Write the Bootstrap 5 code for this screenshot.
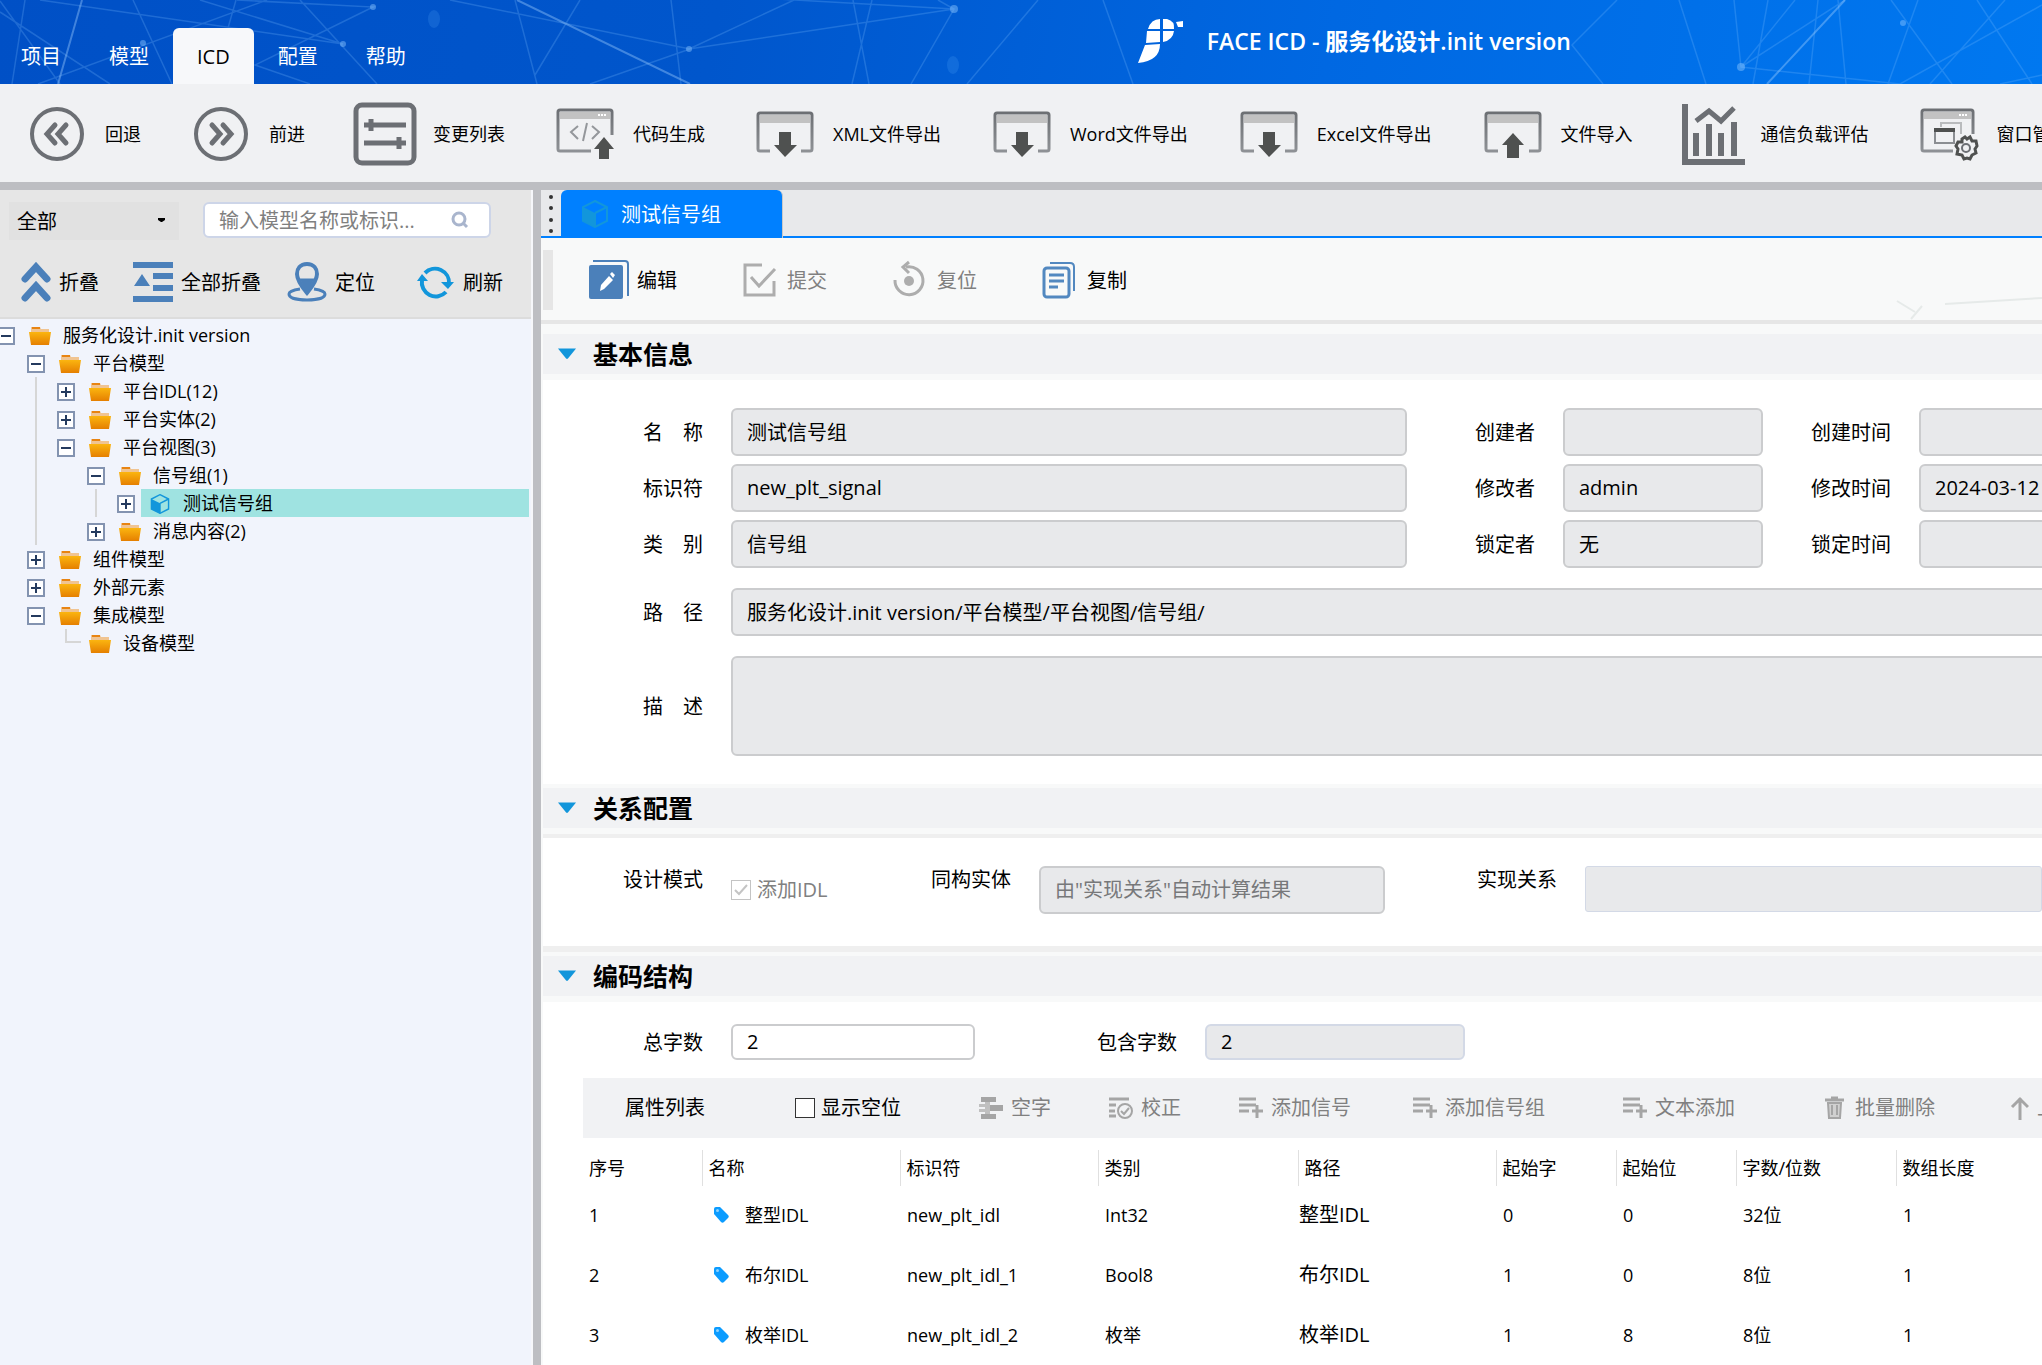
<!DOCTYPE html>
<html lang="zh-CN">
<head>
<meta charset="utf-8">
<meta name="viewport" content="width=device-width, initial-scale=1">
<title>FACE ICD - 服务化设计.init version</title>
<link href="https://cdn.jsdelivr.net/npm/bootstrap@5.3.0/dist/css/bootstrap.min.css" rel="stylesheet">
<style>
  body { font-family: "Open Sans", "Noto Sans CJK SC", sans-serif; font-size: 20px; line-height: 28px; color: #000; background: #fff; }
  button, input, select, textarea { font-family: inherit; font-size: inherit; line-height: inherit; color: inherit; }
  button { background: none; border: 0; padding: 0; white-space: nowrap; }
  svg { flex: none; display: block; }

  /* header */
  .app-header { height: 84px; background: linear-gradient(100deg, #0050c6 0%, #0056cc 35%, #0068e2 65%, #0078f0 100%); }
  .header-mesh { position: absolute; inset: 0; width: 100%; height: 100%; }
  .main-menu { padding: 28px 0 0 0; }
  .main-menu a { display: block; height: 56px; line-height: 58px; padding: 0 24px; color: #fff; text-decoration: none; border-radius: 6px 6px 0 0; }
  .main-menu li:first-child a { padding-left: 21px; }
  .main-menu a.active { background: #f7f8fa; color: #000; }
  .app-brand { margin-left: 708px; height: 82px; gap: 24px; color: #fff; }
  .app-brand h1 { font-size: 23px; font-weight: 600; line-height: 28px; }

  /* main tool bar */
  .tool-strip { height: 106px; background: #f0f1f3; border-bottom: 8px solid #bdbec2; gap: 48px; padding: 2px 0 0 25px; font-size: 18px; }
  .tool-strip button { gap: 16px; }
  .tool-strip .export { margin-right: 1px; }

  /* side panel */
  .main-split { min-height: 0; }
  .side-pane { flex: 0 0 533px; background: #f1f4fc; border-right: 2px solid #f6f7fa; }
  .side-top { background: #e6e6e6; height: 129px; border-bottom: 2px solid #dcdcdc; }
  .side-filter { padding: 12px 0 0 9px; gap: 24px; }
  .type-pick { position: relative; width: 170px; }
  .type-pick select { appearance: none; width: 100%; height: 38px; padding: 2px 8px 0; background: #e1e1e1; border: 0; border-radius: 0; }
  .type-pick svg { position: absolute; right: 13px; top: 15px; pointer-events: none; }
  .search-box { width: 288px; height: 36px; background: #fff; border: 2px solid #cdd5e8; border-radius: 6px; padding: 0 20px 0 14px; }
  .search-box input { flex: 1; min-width: 0; border: 0; outline: 0; padding: 2px 0 0; background: none; }
  .search-box input::placeholder { color: #808080; opacity: 1; }
  .side-tools { display: grid; grid-template-columns: 112px 154px 130px auto; padding: 22px 0 0 21px; }
  .side-tools button { gap: 8px; height: 40px; }
  .txt { padding-top: 2px; }
  .pane-split { flex: 0 0 8px; background: #bdbec2; }

  /* tree */
  .tree, .tree ul { list-style: none; margin: 0; padding: 0; font-size: 18px; }
  .tree { padding: 2px 2px 0 0; margin-left: -3px; }
  .tree ul { padding-left: 30px; }
  .tree ul.guide { background: linear-gradient(#d6d6d6, #d6d6d6) 8px 0 / 2px 100% no-repeat; }
  .tree-row { display: flex; align-items: center; height: 28px; }
  .tree-label { flex: 1; display: flex; align-items: center; gap: 12px; height: 28px; margin-left: 6px; padding-left: 8px; white-space: nowrap; }
  .tree-label.picked { background: #9fe3e1; }
  .fold { position: relative; top: 1px; width: 18px; height: 18px; border: 2px solid #8393b0; background: linear-gradient(#243a5e, #243a5e) center / 10px 2px no-repeat #fff; }
  .fold.plus { background: linear-gradient(#243a5e, #243a5e) center / 10px 2px no-repeat, linear-gradient(#243a5e, #243a5e) center / 2px 10px no-repeat #fff; }
  .tree-label svg { margin-top: 2px; }
  .leaf-elbow { width: 18px; height: 14px; margin-bottom: 14px; }
  .leaf-elbow::before { content: ""; display: block; width: 16px; height: 14px; margin-left: 8px; border-left: 2px solid #d6d6d6; border-bottom: 2px solid #d6d6d6; }

  /* work area */
  .work-pane { flex: 1; min-width: 0; overflow: hidden; background: #f8f9f9; }
  .doc-tabs { height: 48px; background: #e8e9eb; border-bottom: 2px solid #0080ff; }
  .doc-grip { width: 20px; }
  .doc-tab { height: 48px; width: 222px; gap: 12px; padding-left: 20px; background: #0080ff; color: #fff; border-radius: 6px 6px 0 0; border-right: 1px solid #c8c8c8; }
  .doc-actions { position: relative; height: 86px; border-bottom: 4px solid #e6e6e6; padding: 12px 0 0 2px; }
  .bar-grip { width: 10px; height: 60px; background: #e6e6e6; margin-right: 36px; }
  .doc-actions button { width: 150px; height: 60px; gap: 8px; }
  .doc-actions button:disabled, .list-tools button:disabled { color: #808080; }
  .corner-mesh { position: absolute; right: 0; top: 0; }
  .sect { margin-left: 2px; padding-top: 4px; }
  .sect.first { padding-top: 10px; }
  .sect-head { height: 40px; background: #f1f2f4; padding-left: 15px; gap: 17px; }
  .sect-head h2 { font-size: 25px; font-weight: 700; line-height: 40px; }
  .sect-body { background: #fff; margin-top: 6px; }
  .sect-body.fill { min-height: 400px; }
  .rule-above { border-top: 4px solid #efefef; }
  .rule-below { border-bottom: 6px solid #efefef; }
  .form-grid { display: grid; }
  .form-grid > label { text-align: right; padding: 2px 28px 0 0; white-space: pre; }
  .fld { width: 100%; height: 48px; border: 2px solid #cbccce; border-radius: 6px; background: #e8e9eb; padding: 0 14px 2px; outline: 0; display: block; resize: none; }
  .fld::placeholder { color: #77787a; opacity: 1; }
  .fld.short { height: 36px; }
  .fld.editable { background: #fff; }
  .fld.soft { border-color: #d3d9e6; }
  .fld.thin { height: 46px; border-width: 1px; border-radius: 3px; }
  .fld.tall { height: 100px; }
  .fld.spaced { margin: 12px 0; }
  .basic-grid { grid-template-columns: 188px 676px 156px 200px 156px 200px; row-gap: 8px; align-items: center; padding: 28px 0; }
  .wide { grid-column: 2 / -1; }
  .relation-grid { grid-template-columns: 188px 120px 188px 346px 200px 1fr; align-items: start; padding: 28px 0 32px; }
  .relation-grid > label { padding-top: 0; }
  .code-grid { grid-template-columns: 188px 244px 230px 260px; align-items: center; padding: 22px 0 18px; }
  .tick { appearance: none; width: 20px; height: 20px; margin: 0 6px 0 0; border: 1px solid #333; background: #fff; flex: none; border-radius: 0; }
  .tick-wrap { height: 48px; }
  .tick-wrap svg { position: absolute; left: 3px; top: 4px; }
  .tick-wrap .cap { color: #808080; }
  .tick:disabled { border-color: #c4c4c4; }

  .attr-list { margin-left: 40px; }
  .list-bar { height: 60px; background: #f1f2f4; padding-left: 42px; }
  .list-bar h3 { font-size: 20px; font-weight: 400; line-height: 28px; width: 170px; }
  .list-bar .show-empty { width: 184px; }
  .list-tools { display: grid; grid-template-columns: 130px 130px 174px 210px 200px 182px 100px; }
  .list-tools button { gap: 8px; }
  .attr-table { table-layout: fixed; width: 100%; margin-top: 12px; font-size: 18px; line-height: 26px; border-collapse: collapse; white-space: nowrap; }
  .attr-table th { height: 36px; padding: 0 6px; font-weight: 400; border-left: 1px solid #e0e0e0; }
  .attr-table th:first-child { border-left: 0; }
  .attr-table td { height: 60px; padding: 0 7px 2px; }
  .attr-table td:first-child { padding-left: 6px; }
  .attr-table td.path { padding-left: 1px; font-size: 20px; }
  .attr-table .name-cell { gap: 16px; padding-left: 4px; }
</style>
</head>
<body class="d-flex flex-column vh-100 overflow-hidden">

<svg width="0" height="0" class="position-absolute" aria-hidden="true">
  <defs>
    <linearGradient id="gFold" x1="0" y1="0" x2="0" y2="1"><stop offset="0" stop-color="#fbb510"/><stop offset="1" stop-color="#e57f00"/></linearGradient>
    <linearGradient id="gWin" x1="0" y1="0" x2="0" y2="1"><stop offset="0" stop-color="#6d7074"/><stop offset="1" stop-color="#8e9195"/></linearGradient>
    <symbol id="folder" viewBox="0 0 22 18"><path d="M2 0h9l1 2h8v4H2z" fill="#f0c492"/><path d="M3 0h8v2H3z" fill="#e88412"/><path d="M0 5h22l-2 13H2z" fill="url(#gFold)"/></symbol>
    <symbol id="cube" viewBox="0 0 28 28"><path d="M14 1 26 7v14l-12 6L2 21V7z" fill="none" stroke="#1296db" stroke-width="2"/><path d="M2 7l12 6v14L2 21z" fill="#1296db"/><path d="M14 13l12-6M14 13v14" stroke="#1296db" stroke-width="2"/></symbol>
    <symbol id="winbox" viewBox="0 0 64 64"><path d="M17 49H7a2 2 0 0 1-2-2V13a2 2 0 0 1 2-2h50a2 2 0 0 1 2 2v34a2 2 0 0 1-2 2H48" fill="none" stroke="url(#gWin)" stroke-width="3"/><path d="M7 13h50v8H7z" fill="#c2c2c2"/></symbol>
    <symbol id="addrow" viewBox="0 0 24 24"><path d="M0 3h17M0 9h17M0 15h10M13 15h11M18 9v13" fill="none" stroke="#a5a5a5" stroke-width="3"/></symbol>
    <symbol id="tag" viewBox="0 0 16 16"><path d="M1 2a2 2 0 0 1 2-2h4l8 8c1 1 1 2 0 3l-4 4c-1 1-2 1-3 0L1 7z" fill="#0b9cff"/><circle cx="4.500" cy="3.500" r="1.500" fill="#8fd2ff"/></symbol>
    <symbol id="caret" viewBox="0 0 20 12"><path d="M0 0h20l-9 11q-1 1-2 0z" fill="#1296db"/></symbol>
  </defs>
</svg>

<header class="app-header position-relative d-flex flex-shrink-0 overflow-hidden">
  <svg class="header-mesh" viewBox="0 0 2042 84" preserveAspectRatio="xMinYMin slice" aria-hidden="true">
    <g fill="none" stroke="#7fc0ff" stroke-opacity=".24" stroke-width="1.500">
      <path d="M25 0 12 84M0 12 110 84M0 1 60 84M40 0 343 44M133 0l39 84M200 0 343 44M237 0l136 7L255 65l55 19M300 0l77 84M236 0l-8 28M267 0 38 84M450 0l240 49M515 0l22 84M580 0l-45 75M671 0l10 84M590 84l100-35M794 0 689 49 954 9 760-2M853 0l16 84M872 0l-20 84M938 0l16 9-43 75M1038 0l-71 84M1103 0l30 84"/>
      <path d="M1617 0l-45 45 31 39M1679 0l27 84M1734 0l7 67L1900 84M1768 0l-15 84M1741 67 1795 0M1741 67 1845 0M1818 0l-9 84M1838 0l8 84M1891 0l61 84M1918 0l-30 84M2042 5 1900 84M2005 0l-75 84M1977 0l55 84M2042 75l-42 9"/>
    </g>
    <g fill="none" stroke="#9fd0ff" stroke-opacity=".4" stroke-width="2"><path d="M82 0 58 84M517 0l173 84M1845 0l-78 84"/></g>
    <g fill="#8fc8ff" fill-opacity=".45"><circle cx="143" cy="43" r="3"/><circle cx="373" cy="7" r="3"/><circle cx="343" cy="44" r="3"/><circle cx="689" cy="49" r="3"/><circle cx="954" cy="9" r="4"/><circle cx="1741" cy="67" r="4"/><circle cx="1903" cy="23" r="3"/></g>
    <g fill="#5fb0ff" fill-opacity=".18"><ellipse cx="434" cy="19" rx="6" ry="9"/><ellipse cx="953" cy="65" rx="6" ry="9"/></g>
  </svg>
  <nav class="position-relative" aria-label="主菜单">
    <ul class="main-menu list-unstyled d-flex mb-0">
      <li><a href="#">项目</a></li><li><a href="#">模型</a></li><li><a href="#" class="active" aria-current="page">ICD</a></li><li><a href="#">配置</a></li><li><a href="#">帮助</a></li>
    </ul>
  </nav>
  <div class="app-brand position-relative d-flex align-items-center text-nowrap">
    <svg width="45" height="44" viewBox="0 0 45 44" fill="#fff"><path d="M10 10Q13 0 22 0v10H10zM25 0h4q8 2 7 10H25zM9 12h13v11l-14 1zM25 12h11q-1 9-11 11zM7 26l15-1q0 17-22 19zM38 3l7-1v6h-5z"/></svg>
    <h1 class="mb-0">FACE ICD - 服务化设计.init version</h1>
  </div>
</header>

<div class="tool-strip d-flex flex-shrink-0 overflow-hidden" role="toolbar" aria-label="工具栏">
  <button type="button" class="d-flex align-items-center"><svg width="64" height="64" viewBox="0 0 64 64" fill="none" stroke="#6c6f74"><circle cx="32" cy="32" r="25" stroke-width="4"/><path d="M30 23 22 32l8 9M41 23l-8 9 8 9" stroke-width="5" stroke-linecap="round"/></svg>回退</button>
  <button type="button" class="d-flex align-items-center"><svg width="64" height="64" viewBox="0 0 64 64" fill="none" stroke="#6c6f74"><circle cx="32" cy="32" r="25" stroke-width="4"/><path d="M23 23l8 9-8 9M34 23l8 9-8 9" stroke-width="5" stroke-linecap="round"/></svg>前进</button>
  <button type="button" class="d-flex align-items-center"><svg width="64" height="64" viewBox="0 0 64 64" fill="none" stroke="#6c6f74"><rect x="3" y="3" width="58" height="58" rx="6" stroke-width="5"/><path d="M11 23h42M11 41h42M18 17v12M46 35v12" stroke-width="5"/></svg>变更列表</button>
  <button type="button" class="d-flex align-items-center"><svg width="64" height="64" viewBox="0 0 64 64" fill="none"><path d="M38 49H7a2 2 0 0 1-2-2V10a2 2 0 0 1 2-2h50a2 2 0 0 1 2 2v23" stroke="url(#gWin)" stroke-width="3"/><path d="M7 10h50v7H7z" fill="#c2c2c2"/><path d="M45 13h9" stroke="#fff" stroke-width="2" stroke-dasharray="2 1"/><path d="M25 24l-7 6 7 7M39 24l7 6-7 7M34 21l-4 18" stroke="#94979b" stroke-width="2"/><path d="M51 35l10 12h-5v10H46V47h-5z" fill="#4f5150"/></svg>代码生成</button>
  <button type="button" class="export d-flex align-items-center"><svg width="64" height="64" viewBox="0 0 64 64"><use href="#winbox"/><path d="M26 30h12v13h6L32 55 21 43h5z" fill="#4f5150"/></svg>XML文件导出</button>
  <button type="button" class="export d-flex align-items-center"><svg width="64" height="64" viewBox="0 0 64 64"><use href="#winbox"/><path d="M26 30h12v13h6L32 55 21 43h5z" fill="#4f5150"/></svg>Word文件导出</button>
  <button type="button" class="export d-flex align-items-center"><svg width="64" height="64" viewBox="0 0 64 64"><use href="#winbox"/><path d="M26 30h12v13h6L32 55 21 43h5z" fill="#4f5150"/></svg>Excel文件导出</button>
  <button type="button" class="d-flex align-items-center"><svg width="64" height="64" viewBox="0 0 64 64"><use href="#winbox"/><path d="M32 31l11 12h-5v13H26V43h-5z" fill="#4f5150"/></svg>文件导入</button>
  <button type="button" class="d-flex align-items-center"><svg width="64" height="64" viewBox="0 0 64 64" fill="none" stroke="#6c6f74"><path d="M4 2v58h60" stroke-width="6"/><path d="M15 54V31M28 54V22M40 54V31M53 54V20" stroke-width="6"/><path d="M15 19 28 9l12 10L53 6" stroke-width="5"/></svg>通信负载评估</button>
  <button type="button" class="d-flex align-items-center"><svg width="64" height="64" viewBox="0 0 64 64" fill="none"><path d="M36 49H7a2 2 0 0 1-2-2V10a2 2 0 0 1 2-2h47a2 2 0 0 1 2 2v22" stroke="url(#gWin)" stroke-width="3"/><path d="M7 10h47v7H7z" fill="#c2c2c2"/><path d="M42 13h9" stroke="#fff" stroke-width="2" stroke-dasharray="2 1"/><path d="M24 25v-4h20v11" stroke="#b9bbbd" stroke-width="2"/><rect x="18" y="27" width="19" height="14" stroke="#8b8e92" stroke-width="2"/><path d="M17 26h21v4H17z" fill="#4f5150"/><path d="M45 37l3-2 2 2 3-2 2 4h4l1 5-2 3 1 4-4 2-2 4-3-1-3 1-2-4-5-1 1-5-2-3 2-4 4 0z" fill="#f0f1f3" stroke="#4f5150" stroke-width="3"/><circle cx="49" cy="46" r="4" stroke="#6c6f74" stroke-width="2"/></svg>窗口管理</button>
</div>

<div class="main-split d-flex flex-grow-1">
  <aside class="side-pane overflow-hidden">
    <div class="side-top">
      <div class="side-filter d-flex">
        <div class="type-pick"><select aria-label="模型类型"><option>全部</option></select><svg width="8" height="6" viewBox="0 0 8 6"><path d="M0 1h7v2L4 5H3L0 3z"/></svg></div>
        <div class="search-box d-flex align-items-center"><input type="text" placeholder="输入模型名称或标识..." aria-label="搜索模型"><svg width="18" height="18" viewBox="0 0 18 18" fill="none" stroke="#a9b5cd" stroke-width="3"><circle cx="8" cy="8" r="6"/><path d="M12 12l4 4"/></svg></div>
      </div>
      <div class="side-tools">
        <button type="button" class="d-flex align-items-center"><svg width="30" height="40" viewBox="0 0 30 40" fill="none" stroke="#4b80ba" stroke-width="7" stroke-linecap="round"><path d="M4 17 15 5l11 12M4 36l11-12 11 12"/></svg><span class="txt">折叠</span></button>
        <button type="button" class="d-flex align-items-center"><svg width="40" height="40" viewBox="0 0 40 40" fill="#4b80ba"><path d="M0 0h40v6H0zM20 11h20v6H20zM20 23h20v6H20zM0 34h40v6H0zM9 12l8 12H1z"/></svg><span class="txt">全部折叠</span></button>
        <button type="button" class="d-flex align-items-center"><svg width="40" height="40" viewBox="0 0 40 40" fill="none" stroke="#4b80ba"><path d="M20 2c-7 0-10 5-10 10 0 7 10 19 10 19s10-12 10-19c0-5-3-10-10-10z" stroke-width="4"/><path d="M13 17h14l-7 14z" fill="#4b80ba"/><path d="M13 27c-7 1-11 3-11 5 0 4 8 6 18 6s18-2 18-6c0-2-4-4-11-5" stroke-width="3"/></svg><span class="txt">定位</span></button>
        <button type="button" class="d-flex align-items-center"><svg width="38" height="40" viewBox="0 0 38 40" fill="none" stroke="#1296db" stroke-width="4"><path d="M8 11A14 14 0 0 1 32 22M29 30A14 14 0 0 1 5 18"/><path d="M24 20h13l-6 7zM0 19l5-7 6 7z" fill="#1296db" stroke="none"/></svg><span class="txt">刷新</span></button>
      </div>
    </div>
    <ul class="tree">
      <li><div class="tree-row"><button type="button" class="fold" aria-label="收起"></button><span class="tree-label"><svg width="22" height="18"><use href="#folder"/></svg>服务化设计.init version</span></div>
        <ul>
          <li><div class="tree-row"><button type="button" class="fold" aria-label="收起"></button><span class="tree-label"><svg width="22" height="18"><use href="#folder"/></svg>平台模型</span></div>
            <ul class="guide">
              <li><div class="tree-row"><button type="button" class="fold plus" aria-label="展开"></button><span class="tree-label"><svg width="22" height="18"><use href="#folder"/></svg>平台IDL(12)</span></div></li>
              <li><div class="tree-row"><button type="button" class="fold plus" aria-label="展开"></button><span class="tree-label"><svg width="22" height="18"><use href="#folder"/></svg>平台实体(2)</span></div></li>
              <li><div class="tree-row"><button type="button" class="fold" aria-label="收起"></button><span class="tree-label"><svg width="22" height="18"><use href="#folder"/></svg>平台视图(3)</span></div>
                <ul>
                  <li><div class="tree-row"><button type="button" class="fold" aria-label="收起"></button><span class="tree-label"><svg width="22" height="18"><use href="#folder"/></svg>信号组(1)</span></div>
                    <ul class="guide"><li><div class="tree-row"><button type="button" class="fold plus" aria-label="展开"></button><span class="tree-label picked"><svg width="22" height="20"><use href="#cube"/></svg>测试信号组</span></div></li></ul>
                  </li>
                  <li><div class="tree-row"><button type="button" class="fold plus" aria-label="展开"></button><span class="tree-label"><svg width="22" height="18"><use href="#folder"/></svg>消息内容(2)</span></div></li>
                </ul>
              </li>
            </ul>
          </li>
          <li><div class="tree-row"><button type="button" class="fold plus" aria-label="展开"></button><span class="tree-label"><svg width="22" height="18"><use href="#folder"/></svg>组件模型</span></div></li>
          <li><div class="tree-row"><button type="button" class="fold plus" aria-label="展开"></button><span class="tree-label"><svg width="22" height="18"><use href="#folder"/></svg>外部元素</span></div></li>
          <li><div class="tree-row"><button type="button" class="fold" aria-label="收起"></button><span class="tree-label"><svg width="22" height="18"><use href="#folder"/></svg>集成模型</span></div>
            <ul><li><div class="tree-row"><span class="leaf-elbow"></span><span class="tree-label"><svg width="22" height="18"><use href="#folder"/></svg>设备模型</span></div></li></ul>
          </li>
        </ul>
      </li>
    </ul>
  </aside>
  <div class="pane-split"></div>

  <main class="work-pane">
    <div class="doc-tabs d-flex">
      <div class="doc-grip"><svg width="20" height="46" viewBox="0 0 20 46" fill="#333"><circle cx="10" cy="7" r="2"/><circle cx="10" cy="18" r="2"/><circle cx="10" cy="30" r="2"/><circle cx="10" cy="41" r="2"/></svg></div>
      <button type="button" class="doc-tab d-flex align-items-center"><svg width="28" height="28"><use href="#cube"/></svg><span class="txt">测试信号组</span></button>
    </div>
    <div class="doc-actions d-flex">
      <svg class="corner-mesh" width="160" height="82" viewBox="0 0 160 82" fill="none" stroke="#e6eae9" stroke-width="2" aria-hidden="true"><path d="M15 63l18 11M40 68 29 81M63 66l97-6"/></svg>
      <span class="bar-grip"></span>
      <button type="button" class="d-flex align-items-center"><svg width="40" height="40" viewBox="0 0 40 40"><path d="M4 1h32q3 0 3 3v32" fill="none" stroke="#4b80ba" stroke-width="2"/><rect y="5" width="34" height="34" rx="2" fill="#4b80ba"/><path d="M11 31l1-6 8-9 4 4-9 9zM21 14l2-2 3 3-2 3z" fill="#fff"/></svg><span class="txt">编辑</span></button>
      <button type="button" class="d-flex align-items-center" disabled><svg width="40" height="40" viewBox="0 0 40 40" fill="none" stroke="#adadad" stroke-width="3"><path d="M23 5H6v30h29V21"/><path d="M12 17l8 9L36 9"/></svg><span class="txt">提交</span></button>
      <button type="button" class="d-flex align-items-center" disabled><svg width="40" height="40" viewBox="0 0 40 40" fill="none" stroke="#adadad" stroke-width="3"><path d="M17 7A14 14 0 1 1 6 20"/><path d="M20 2l-6 5 6 6"/><circle cx="20" cy="21" r="5" fill="#adadad" stroke="none"/></svg><span class="txt">复位</span></button>
      <button type="button" class="d-flex align-items-center"><svg width="40" height="40" viewBox="0 0 40 40" fill="none" stroke="#5288c0" stroke-width="3"><path d="M11 3h20q4 0 4 4v24" stroke-width="2"/><rect x="5" y="8" width="25" height="29" rx="3"/><path d="M10 15h15M10 21h15M10 27h9"/></svg><span class="txt">复制</span></button>
    </div>

    <section class="sect first">
      <div class="sect-head d-flex align-items-center"><svg width="18" height="12"><use href="#caret"/></svg><h2 class="mb-0">基本信息</h2></div>
      <div class="sect-body">
        <div class="form-grid basic-grid">
          <label for="fName">名　称</label><input id="fName" class="fld" value="测试信号组" readonly>
          <label for="fCreator">创建者</label><input id="fCreator" class="fld" readonly>
          <label for="fCreated">创建时间</label><input id="fCreated" class="fld" readonly>
          <label for="fId">标识符</label><input id="fId" class="fld" value="new_plt_signal" readonly>
          <label for="fEditor">修改者</label><input id="fEditor" class="fld" value="admin" readonly>
          <label for="fEdited">修改时间</label><input id="fEdited" class="fld" value="2024-03-12" readonly>
          <label for="fKind">类　别</label><input id="fKind" class="fld" value="信号组" readonly>
          <label for="fLocker">锁定者</label><input id="fLocker" class="fld" value="无" readonly>
          <label for="fLocked">锁定时间</label><input id="fLocked" class="fld" readonly>
          <label for="fPath">路　径</label><input id="fPath" class="fld wide spaced" value="服务化设计.init version/平台模型/平台视图/信号组/" readonly>
          <label for="fDesc">描　述</label><textarea id="fDesc" class="fld tall wide" readonly></textarea>
        </div>
      </div>
    </section>

    <section class="sect">
      <div class="sect-head d-flex align-items-center"><svg width="18" height="12"><use href="#caret"/></svg><h2 class="mb-0">关系配置</h2></div>
      <div class="sect-body rule-above rule-below">
        <div class="form-grid relation-grid">
          <label for="fMode">设计模式</label>
          <div class="tick-wrap d-flex align-items-center"><span class="position-relative d-flex"><input id="fMode" class="tick" type="checkbox" checked disabled aria-label="添加IDL"><svg width="14" height="12" viewBox="0 0 14 12" fill="none" stroke="#c4c4c4" stroke-width="2"><path d="M1 6l4 4 8-9"/></svg></span><span class="cap text-nowrap">添加IDL</span></div>
          <label for="fSame">同构实体</label><input id="fSame" class="fld" placeholder="由&quot;实现关系&quot;自动计算结果" readonly>
          <label for="fImpl">实现关系</label><input id="fImpl" class="fld soft thin" readonly>
        </div>
      </div>
    </section>

    <section class="sect">
      <div class="sect-head d-flex align-items-center"><svg width="18" height="12"><use href="#caret"/></svg><h2 class="mb-0">编码结构</h2></div>
      <div class="sect-body fill">
        <div class="form-grid code-grid">
          <label for="fTotal">总字数</label><input id="fTotal" class="fld short editable" value="2">
          <label for="fUsed">包含字数</label><input id="fUsed" class="fld short soft" value="2" readonly>
        </div>
        <div class="attr-list">
          <div class="list-bar d-flex align-items-center">
            <h3 class="mb-0 flex-shrink-0">属性列表</h3>
            <label class="show-empty d-flex align-items-center flex-shrink-0"><input type="checkbox" class="tick">显示空位</label>
            <div class="list-tools">
              <button type="button" class="d-flex align-items-center" disabled><svg width="24" height="24" viewBox="0 0 24 24" fill="#a5a5a5"><path d="M2 1h15v5H2zM9 9h15v6H9zM2 18h15v5H2z"/><path d="M0 8h6v3H0zM0 13h6v3H0zM6 6h5v12H6z" fill="#c0c0c0"/></svg>空字</button>
              <button type="button" class="d-flex align-items-center" disabled><svg width="24" height="24" viewBox="0 0 24 24" fill="none" stroke="#a5a5a5"><path d="M0 3h20M0 9h7M0 15h6M0 20h7" stroke-width="3"/><circle cx="16" cy="15" r="7" stroke-width="2"/><path d="M12 15l3 3 5-6" stroke-width="2"/></svg>校正</button>
              <button type="button" class="d-flex align-items-center" disabled><svg width="24" height="24"><use href="#addrow"/></svg>添加信号</button>
              <button type="button" class="d-flex align-items-center" disabled><svg width="24" height="24"><use href="#addrow"/></svg>添加信号组</button>
              <button type="button" class="d-flex align-items-center" disabled><svg width="24" height="24"><use href="#addrow"/></svg>文本添加</button>
              <button type="button" class="d-flex align-items-center" disabled><svg width="24" height="24" viewBox="0 0 24 24" fill="none" stroke="#a5a5a5"><path d="M2 4h19M8 2h7" stroke-width="3"/><path d="M5 7h13l-1 15H6z" stroke-width="2" fill="#d0d0d0"/><path d="M9 9v10M14 9v10" stroke-width="2"/></svg>批量删除</button>
              <button type="button" class="d-flex align-items-center" disabled><svg width="24" height="24" viewBox="0 0 24 24" fill="none" stroke="#a5a5a5" stroke-width="3"><path d="M15 24V2M7 11l8-8 8 8"/></svg>上移</button>
            </div>
          </div>
          <table class="attr-table">
            <colgroup><col style="width:119px"><col style="width:198px"><col style="width:198px"><col style="width:200px"><col style="width:198px"><col style="width:120px"><col style="width:120px"><col style="width:160px"><col></colgroup>
            <thead><tr><th>序号</th><th>名称</th><th>标识符</th><th>类别</th><th>路径</th><th>起始字</th><th>起始位</th><th>字数/位数</th><th>数组长度</th></tr></thead>
            <tbody>
              <tr><td>1</td><td><span class="name-cell d-flex align-items-center"><svg width="16" height="16"><use href="#tag"/></svg>整型IDL</span></td><td>new_plt_idl</td><td>Int32</td><td class="path">整型IDL</td><td>0</td><td>0</td><td>32位</td><td>1</td></tr>
              <tr><td>2</td><td><span class="name-cell d-flex align-items-center"><svg width="16" height="16"><use href="#tag"/></svg>布尔IDL</span></td><td>new_plt_idl_1</td><td>Bool8</td><td class="path">布尔IDL</td><td>1</td><td>0</td><td>8位</td><td>1</td></tr>
              <tr><td>3</td><td><span class="name-cell d-flex align-items-center"><svg width="16" height="16"><use href="#tag"/></svg>枚举IDL</span></td><td>new_plt_idl_2</td><td>枚举</td><td class="path">枚举IDL</td><td>1</td><td>8</td><td>8位</td><td>1</td></tr>
            </tbody>
          </table>
        </div>
      </div>
    </section>
  </main>
</div>
<script src="https://cdn.jsdelivr.net/npm/bootstrap@5.3.0/dist/js/bootstrap.bundle.min.js"></script>
</body>
</html>
